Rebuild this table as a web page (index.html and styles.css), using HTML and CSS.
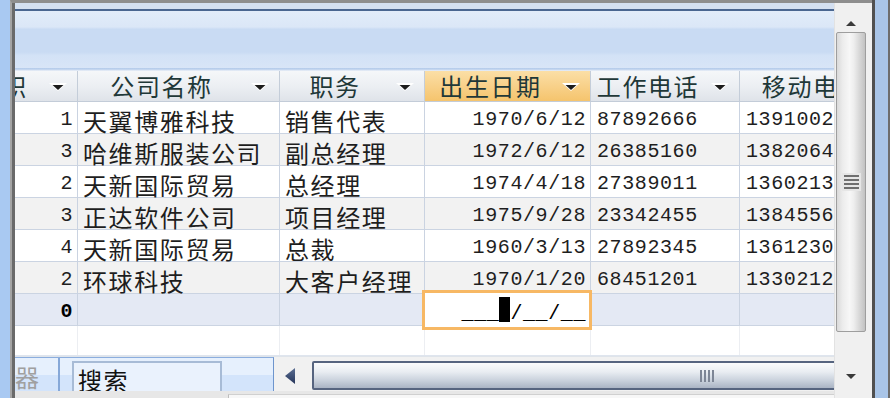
FILE: index.html
```html
<!DOCTYPE html>
<html lang="zh">
<head>
<meta charset="utf-8">
<link rel="stylesheet" href="styles.css">
</head>
<body>
<div class="screen">
  <div class="side-left"></div>
  <div class="frame">
    <div class="main">
      <div class="topband">
        <div class="tb-light"></div>
        <div class="tb-line"></div>
        <div class="tb-grad"></div>
        <div class="tb-bottom"></div>
      </div>
      <div class="table">
        <div class="row head">
          <div class="hcell first"><span class="htext clip">职</span><svg class="dd" width="18" height="8" viewBox="0 0 18 8"><path d="M0 0H18L9 8Z" fill="#fff"/><path d="M3.5 2H14.5L9 7Z" fill="#1c1c1c"/></svg></div>
          <div class="hcell"><span class="htext">公司名称</span><svg class="dd" width="18" height="8" viewBox="0 0 18 8"><path d="M0 0H18L9 8Z" fill="#fff"/><path d="M3.5 2H14.5L9 7Z" fill="#1c1c1c"/></svg></div>
          <div class="hcell"><span class="htext">职务</span><svg class="dd" width="18" height="8" viewBox="0 0 18 8"><path d="M0 0H18L9 8Z" fill="#fff"/><path d="M3.5 2H14.5L9 7Z" fill="#1c1c1c"/></svg></div>
          <div class="hcell active"><span class="htext">出生日期</span><svg class="dd" width="18" height="8" viewBox="0 0 18 8"><path d="M0 0H18L9 8Z" fill="#fff"/><path d="M3.5 2H14.5L9 7Z" fill="#1c1c1c"/></svg></div>
          <div class="hcell"><span class="htext">工作电话</span><svg class="dd" width="18" height="8" viewBox="0 0 18 8"><path d="M0 0H18L9 8Z" fill="#fff"/><path d="M3.5 2H14.5L9 7Z" fill="#1c1c1c"/></svg></div>
          <div class="hcell"><span class="htext">移动电话</span><svg class="dd" width="18" height="8" viewBox="0 0 18 8"><path d="M0 0H18L9 8Z" fill="#fff"/><path d="M3.5 2H14.5L9 7Z" fill="#1c1c1c"/></svg></div>
        </div>
        <div class="row">
          <div class="cell num right">1</div>
          <div class="cell cjk">天翼博雅科技</div>
          <div class="cell cjk">销售代表</div>
          <div class="cell num right">1970/6/12</div>
          <div class="cell num">87892666</div>
          <div class="cell num">13910021234</div>
        </div>
        <div class="row alt">
          <div class="cell num right">3</div>
          <div class="cell cjk">哈维斯服装公司</div>
          <div class="cell cjk">副总经理</div>
          <div class="cell num right">1972/6/12</div>
          <div class="cell num">26385160</div>
          <div class="cell num">13820645678</div>
        </div>
        <div class="row">
          <div class="cell num right">2</div>
          <div class="cell cjk">天新国际贸易</div>
          <div class="cell cjk">总经理</div>
          <div class="cell num right">1974/4/18</div>
          <div class="cell num">27389011</div>
          <div class="cell num">13602135678</div>
        </div>
        <div class="row alt">
          <div class="cell num right">3</div>
          <div class="cell cjk">正达软件公司</div>
          <div class="cell cjk">项目经理</div>
          <div class="cell num right">1975/9/28</div>
          <div class="cell num">23342455</div>
          <div class="cell num">13845561234</div>
        </div>
        <div class="row">
          <div class="cell num right">4</div>
          <div class="cell cjk">天新国际贸易</div>
          <div class="cell cjk">总裁</div>
          <div class="cell num right">1960/3/13</div>
          <div class="cell num">27892345</div>
          <div class="cell num">13612305678</div>
        </div>
        <div class="row alt">
          <div class="cell num right">2</div>
          <div class="cell cjk">环球科技</div>
          <div class="cell cjk">大客户经理</div>
          <div class="cell num right">1970/1/20</div>
          <div class="cell num">68451201</div>
          <div class="cell num">13302121234</div>
        </div>
        <div class="row newrec">
          <div class="cell num right bold">0</div>
          <div class="cell"></div>
          <div class="cell"></div>
          <div class="cell edit"><div class="editbox"><span>___</span><span class="caret"></span><span>/__/__</span></div></div>
          <div class="cell"></div>
          <div class="cell"></div>
        </div>
        <div class="row blank">
          <div class="cell"></div>
          <div class="cell"></div>
          <div class="cell"></div>
          <div class="cell"></div>
          <div class="cell"></div>
          <div class="cell"></div>
        </div>
      </div>
      <div class="bottombar">
        <div class="tabs">
          <div class="tab-prev"><span class="clip-tab">器</span></div>
          <div class="tab-sep"></div>
          <div class="tab-active">搜索</div>
        </div>
        <div class="hscroll">
          <div class="harrow"><svg width="10" height="16" viewBox="0 0 10 16"><defs><linearGradient id="ga" x1="0" y1="0" x2="0" y2="1"><stop offset="0" stop-color="#5a6d92"/><stop offset="1" stop-color="#26355a"/></linearGradient></defs><path d="M10 0V16L0 8Z" fill="url(#ga)"/></svg></div>
          <div class="hthumb"><div class="hgrip"><i></i><i></i><i></i><i></i></div></div>
        </div>
      </div>
      <div class="status"><div class="status-box"></div></div>
    </div>
    <div class="vscroll">
      <div class="varrow up"><svg width="10" height="5" viewBox="0 0 10 5"><path d="M0 5H10L5 0Z" fill="#3a3a3a"/></svg></div>
      <div class="vthumb"><div class="vgrip"><i></i><i></i><i></i><i></i></div></div>
      <div class="vspace"></div>
      <div class="varrow down"><svg width="10" height="5" viewBox="0 0 10 5"><path d="M0 0H10L5 5Z" fill="#3a3a3a"/></svg></div>
    </div>
  </div>
  <div class="side-right"></div>
</div>
</body>
</html>
```

FILE: styles.css
```css
html, body {
  margin: 0;
  padding: 0;
}
body {
  width: 890px;
  height: 398px;
  overflow: hidden;
  background: #a8c6ee;
  font-family: "Noto Sans CJK SC", sans-serif;
}
.screen {
  display: flex;
  height: 398px;
}
.side-left {
  width: 10px;
  flex: none;
  background: #a9c9f2;
}
.frame {
  flex: none;
  width: 862px;
  height: 398px;
  box-sizing: border-box;
  border-top: 3px solid #8e8e8e;
  border-left: 2px solid #a4a4a4;
  display: flex;
}
.main {
  flex: none;
  width: 822px;
  box-sizing: border-box;
  border-left: 3px solid #6a6a6a;
  display: flex;
  flex-direction: column;
  overflow: hidden;
}
.side-right {
  flex: none;
  width: 18px;
  box-sizing: border-box;
  border-left: 3px solid #505050;
  border-right: 2px solid #6d6d6d;
  background: #a9c5e8;
}

/* top band */
.topband {
  flex: none;
  height: 68px;
  display: flex;
  flex-direction: column;
}
.tb-light {
  height: 6px;
  background: #d4e0f1;
}
.tb-line {
  height: 2px;
  background: #4a6690;
}
.tb-grad {
  height: 57px;
  background: linear-gradient(to bottom, #e2ecf9 0%, #dbe7f7 28%, #c9dbf3 32%, #c9dbf3 72%, #d3e2f6 78%, #d8e5f7 100%);
}
.tb-bottom {
  height: 3px;
  background: linear-gradient(to bottom, #b1c9ea, #c4d6ef, #eef2f7);
}

/* table */
.table {
  flex: none;
  width: 906px;
}
.row {
  display: grid;
  grid-template-columns: 63px 202px 145px 166px 149px 181px;
  height: 32px;
  box-sizing: border-box;
  border-bottom: 1px solid #cbd4e2;
  background: #ffffff;
}
.row.alt {
  background: #f2f2f2;
}
.row.newrec {
  background: #e4e9f4;
}
.row.blank {
  height: 30px;
  border-bottom: 1px solid #dfe5ee;
  background: #ffffff;
}
.row.head {
  height: 31px;
  border-bottom: 1px solid #c3ccd8;
  background: linear-gradient(to bottom, #f5f7f9 0%, #eceff3 50%, #dfe3e9 100%);
}
.hcell {
  display: flex;
  align-items: center;
  border-right: 1px solid #c4cdd9;
  min-width: 0;
}
.hcell.first {
  overflow: hidden;
}
.hcell.active {
  background: linear-gradient(to bottom, #fbdfa6 0%, #f8d18a 50%, #f5c46d 100%);
}
.htext {
  flex: 1;
  min-width: 0;
  text-align: center;
  font-size: 24px;
  letter-spacing: 1.6px;
  line-height: 30px;
  color: #1f3838;
  white-space: nowrap;
}
.hcell.first .htext {
  text-align: left;
  margin-left: -13px;
}
.dd {
  flex: none;
  margin-left: 6px;
  margin-right: 10px;
  margin-top: 2px;
}
.cell {
  border-right: 1px solid #cad3e1;
  white-space: nowrap;
  min-width: 0;
  color: #1e1e1e;
  box-sizing: border-box;
}
.row.blank .cell {
  border-right-color: #eceef2;
}
.cjk {
  font-size: 24px;
  letter-spacing: 1.6px;
  line-height: 31px;
  padding: 3px 0 0 5px;
}
.num {
  font-family: "Liberation Mono", monospace;
  font-size: 20px;
  letter-spacing: 0.6px;
  line-height: 31px;
  padding: 2px 0 0 6px;
}
.num.right {
  text-align: right;
  padding-left: 0;
  padding-right: 4px;
}
.num.bold {
  font-weight: bold;
  color: #000;
}
.cell.edit {
  position: relative;
}
.editbox {
  position: absolute;
  left: -3px;
  right: -2px;
  top: -4px;
  bottom: -3px;
  border: 3px solid #f7b864;
  background: #ffffff;
  display: flex;
  justify-content: flex-end;
  align-items: flex-end;
  padding: 0 3px 3px 0;
  font-family: "Liberation Mono", monospace;
  font-size: 20px;
  letter-spacing: 0.6px;
  line-height: 20px;
  color: #000;
  z-index: 2;
}
.caret {
  display: inline-block;
  width: 11px;
  height: 25px;
  background: #000;
  margin-bottom: 2px;
}

/* bottom bar */
.bottombar {
  flex: none;
  height: 35px;
  display: flex;
  border-top: 1px solid #dfe4ea;
  box-sizing: border-box;
}
.tabs {
  flex: none;
  width: 259px;
  box-sizing: border-box;
  border-top: 1px solid #8caede;
  border-right: 1px solid #6e95cd;
  background: linear-gradient(to bottom, #e6f0fd 0%, #e6f0fd 50%, #d3e4fb 52%, #d3e4fb 100%);
  display: flex;
  align-items: stretch;
}
.tab-prev {
  width: 43px;
  overflow: hidden;
  font-size: 24px;
  line-height: 30px;
  color: #a0a0a0;
  padding-top: 4px;
}
.tab-sep {
  width: 2px;
  background: #86a8d8;
}
.tab-active {
  width: 150px;
  margin: 3px 0 0 12px;
  box-sizing: border-box;
  border: 2px solid #a7bbd6;
  border-bottom: none;
  background: #eaf2fd;
  font-size: 24px;
  letter-spacing: 1.6px;
  line-height: 30px;
  color: #111;
  padding: 2px 0 0 4px;
  overflow: hidden;
}
.hscroll {
  flex: 1;
  background: #f1f1f1;
  display: flex;
  align-items: stretch;
  padding: 4px 0 1px 0;
}
.harrow {
  width: 38px;
  box-sizing: border-box;
  display: flex;
  align-items: center;
  justify-content: flex-start;
  padding-left: 11px;
}
.hthumb {
  flex: 1;
  margin-right: -6px;
  box-sizing: border-box;
  border: 2px solid #56647f;
  border-radius: 2px;
  background: linear-gradient(to bottom, #fafbfc 0%, #e9edf2 35%, #c9d1dc 70%, #aab4c4 100%);
  display: flex;
  align-items: center;
  justify-content: flex-end;
  padding-right: 124px;
}
.hgrip {
  display: flex;
  gap: 2px;
  height: 12px;
}
.hgrip i {
  width: 2px;
  background: #7d8696;
}
.status {
  flex: 1;
  background: #e7e7e7;
  display: flex;
  padding: 3px 0 0 213px;
}
.status-box {
  flex: 1;
  background: #f7f7f7;
  border-left: 1px solid #bdbdbd;
  border-top: 1px solid #d0d0d0;
}

/* vertical scrollbar */
.vscroll {
  flex: none;
  width: 37px;
  background: #f0f0f0;
  display: flex;
  flex-direction: column;
  align-items: flex-start;
  border-left: 1px solid #e2e2e2;
}
.varrow {
  width: 32px;
  display: flex;
  justify-content: center;
}
.varrow.up {
  height: 29px;
  align-items: flex-end;
  padding-bottom: 6px;
  box-sizing: border-box;
}
.vthumb {
  width: 30px;
  height: 300px;
  margin-left: 1px;
  box-sizing: border-box;
  border: 1px solid #9e9e9e;
  border-radius: 2px;
  background: linear-gradient(to right, #dadada 0%, #ececec 20%, #f7f7f7 45%, #eeeeee 60%, #d2d2d2 85%, #c2c2c2 100%);
  display: flex;
  align-items: center;
  justify-content: center;
}
.vgrip {
  display: flex;
  flex-direction: column;
  gap: 2px;
  width: 15px;
  padding: 2px;
  background: #e6e6e6;
}
.vgrip i {
  height: 2px;
  background: #6f6f6f;
}
.vspace {
  flex: 1;
}
.varrow.down {
  height: 30px;
  align-items: center;
  padding-bottom: 14px;
  box-sizing: border-box;
}
```
